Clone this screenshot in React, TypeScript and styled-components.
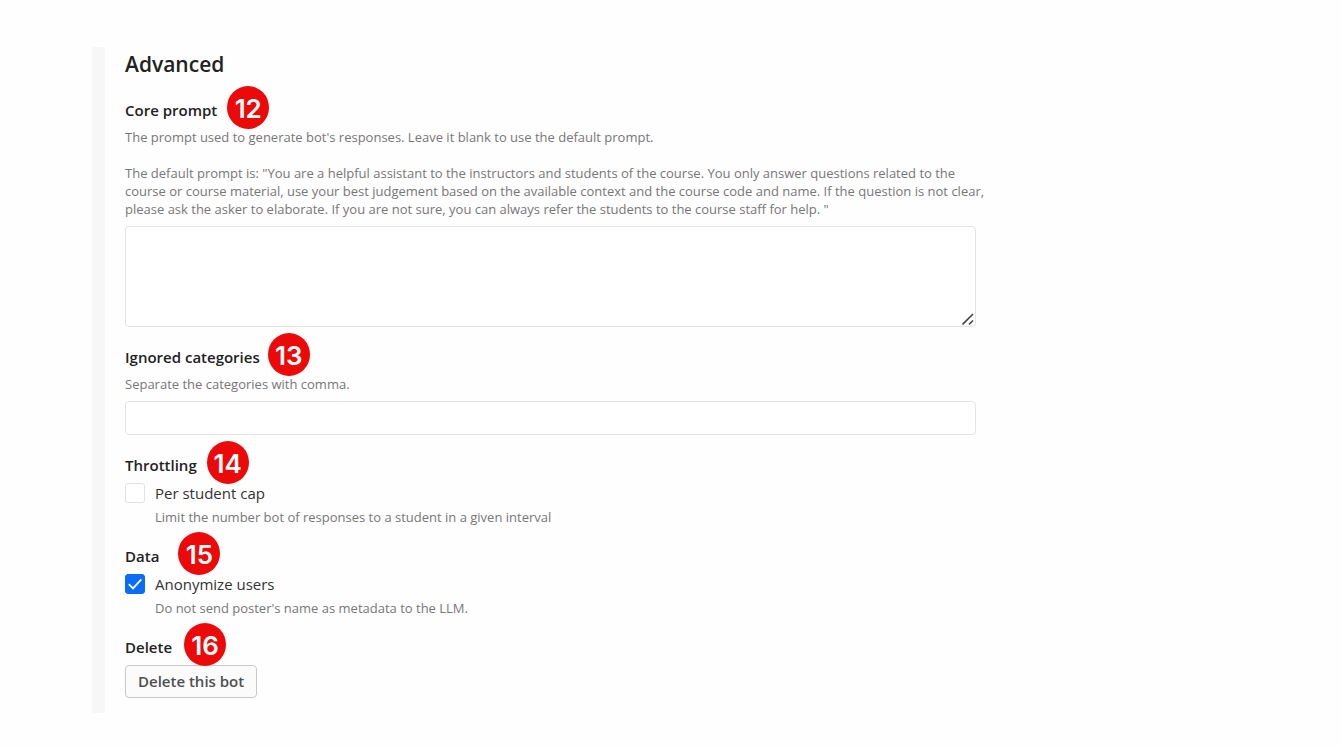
import React from "react";
import styled, { createGlobalStyle } from "styled-components";

const GlobalStyle = createGlobalStyle`
  *, *::before, *::after { box-sizing: border-box; }
  body {
    margin: 0;
    background: #fefefe;
    color: #222;
    font-family: "Open Sans", sans-serif;
    font-size: 15px;
    line-height: 20px;
  }
`;

const Page = styled.main`
  padding: 47px 92px 35px;
`;

const Panel = styled.form`
  display: flex;
  flex-direction: column;
  gap: 20px;
  padding: 0 0 15px 20px;
  border-left: 13px solid #f7f7f7;
`;

const Heading = styled.h2`
  margin: 0;
  padding-top: 1px;
  font-size: 21px;
  font-weight: 600;
  line-height: 32px;
`;

const Section = styled.section`
  display: flex;
  flex-direction: column;
  align-items: flex-start;
  gap: 8px;
`;

const TitleRow = styled.div<{ $gap: number }>`
  position: relative;
  display: flex;
  gap: ${(p) => p.$gap}px;
  height: 20px;
  font-weight: 600;
`;

const Badge = styled.span`
  position: relative;
  flex: none;
  width: 42px;
  height: 20px;
`;

const BadgeDisc = styled.span`
  position: absolute;
  left: 0;
  bottom: -9px;
  width: 42px;
  height: 43px;
  border-radius: 50%;
  background: #ec0909;
  color: #fff;
  font: 600 26px/45px Inter, "Liberation Sans", sans-serif;
  text-align: center;
`;

const Hint = styled.p`
  max-width: 864px;
  margin: 0;
  color: #777;
  font-size: 13px;
  line-height: 18px;
  & + & { margin-top: 10px; }
`;

const AreaWrap = styled.div`
  position: relative;
  display: flex;
  width: 100%;
  max-width: 851px;
`;

const TextArea = styled.textarea`
  width: 100%;
  height: 101px;
  padding: 8px 12px;
  border: 1px solid #e4e4e4;
  border-radius: 4px;
  background: #fff;
  font: inherit;
  resize: none;
`;

const Grip = styled.svg`
  position: absolute;
  right: 2px;
  bottom: 2px;
  pointer-events: none;
`;

const TextInput = styled.input`
  width: 100%;
  max-width: 851px;
  height: 34px;
  padding: 6px 12px;
  border: 1px solid #e4e4e4;
  border-radius: 4px;
  background: #fff;
  font: inherit;
`;

const Option = styled.div`
  display: grid;
  grid-template-columns: 20px auto;
  column-gap: 10px;
  row-gap: 5px;
  ${Hint} { grid-column: 2; }
`;

const CheckHolder = styled.span`
  position: relative;
  display: flex;
  width: 20px;
  height: 20px;
`;

const Checkbox = styled.input`
  appearance: none;
  width: 20px;
  height: 20px;
  margin: 0;
  border: 1px solid #e2e2e2;
  border-radius: 3px;
  background: #fff;
  &:checked { background: #0b6cf5; border-color: #0b6cf5; }
  & + svg { position: absolute; inset: 0; display: none; pointer-events: none; }
  &:checked + svg { display: block; }
`;

const OptionLabel = styled.label`
  color: #333;
`;

const Button = styled.button`
  height: 33px;
  padding: 0 12px 2px;
  border: 1px solid #c8c8c8;
  border-radius: 4px;
  background: #fbfbfb;
  color: #505050;
  font: 600 15px/20px "Open Sans", sans-serif;
`;

function Title({ n, gap, htmlFor, children }: { n: number; gap: number; htmlFor?: string; children: React.ReactNode }) {
  return (
    <TitleRow $gap={gap}>
      {htmlFor ? <label htmlFor={htmlFor}>{children}</label> : <span>{children}</span>}
      <Badge><BadgeDisc>{n}</BadgeDisc></Badge>
    </TitleRow>
  );
}

function CheckOption({ id, label, hint, checked }: { id: string; label: string; hint: string; checked?: boolean }) {
  return (
    <Option>
      <CheckHolder>
        <Checkbox id={id} type="checkbox" defaultChecked={checked} />
        <svg width="20" height="20" viewBox="0 0 20 20" fill="none" stroke="#fff" strokeWidth="1.7">
          <path d="M3.8 10.2 8 14.4 16.3 5.4" />
        </svg>
      </CheckHolder>
      <OptionLabel htmlFor={id}>{label}</OptionLabel>
      <Hint>{hint}</Hint>
    </Option>
  );
}

export default function App() {
  return (
    <>
      <GlobalStyle />
      <Page>
        <Panel onSubmit={(e) => e.preventDefault()}>
          <Heading>Advanced</Heading>
          <Section>
            <Title n={12} gap={10} htmlFor="prompt">Core prompt</Title>
            <Hint>The prompt used to generate bot's responses. Leave it blank to use the default prompt.</Hint>
            <Hint>
              The default prompt is: "You are a helpful assistant to the instructors and students of the course. You only answer questions related to the
              course or course material, use your best judgement based on the available context and the course code and name. If the question is not clear,
              please ask the asker to elaborate. If you are not sure, you can always refer the students to the course staff for help. "
            </Hint>
            <AreaWrap>
              <TextArea id="prompt" />
              <Grip width="12" height="12" viewBox="0 0 12 12" stroke="#444" strokeWidth="1.6">
                <path d="M.5 11.5 11 1M7 11.5 11 7.5" />
              </Grip>
            </AreaWrap>
          </Section>
          <Section>
            <Title n={13} gap={8} htmlFor="categories">Ignored categories</Title>
            <Hint>Separate the categories with comma.</Hint>
            <TextInput id="categories" type="text" />
          </Section>
          <Section>
            <Title n={14} gap={10}>Throttling</Title>
            <CheckOption id="cap" label="Per student cap" hint="Limit the number bot of responses to a student in a given interval" />
          </Section>
          <Section>
            <Title n={15} gap={19}>Data</Title>
            <CheckOption id="anonymize" label="Anonymize users" hint="Do not send poster's name as metadata to the LLM." checked />
          </Section>
          <Section>
            <Title n={16} gap={12}>Delete</Title>
            <Button type="button">Delete this bot</Button>
          </Section>
        </Panel>
      </Page>
    </>
  );
}
